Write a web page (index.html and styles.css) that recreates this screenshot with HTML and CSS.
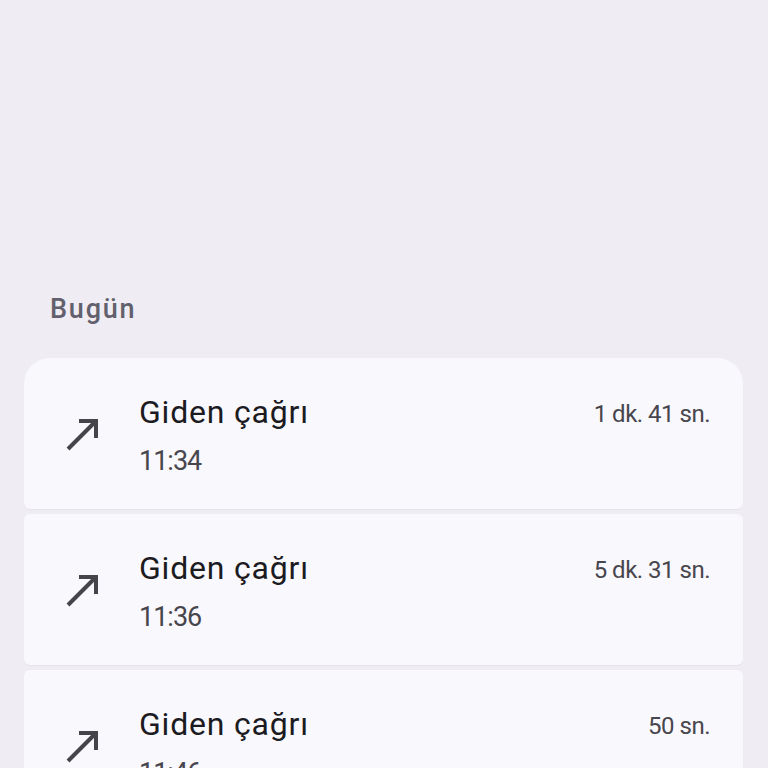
FILE: index.html
```html
<!DOCTYPE html>
<html lang="tr">
<head>
  <meta charset="UTF-8" />
  <meta name="viewport" content="width=device-width, initial-scale=1.0"/>
  <title>Arama geçmişi</title>
  <link rel="stylesheet" href="styles.css">
</head>
<body>
  <div class="history">
    <h2 class="day">Bugün</h2>
    <div class="calls">
      <div class="call first">
        <svg class="icon" viewBox="0 0 36 36"><path d="M3 33L31 5M14 5H31V22"/></svg>
        <div class="info">
          <span class="type">Giden çağrı</span>
          <span class="duration">1 dk. 41 sn.</span>
          <span class="time">11:34</span>
        </div>
      </div>
      <div class="call">
        <svg class="icon" viewBox="0 0 36 36"><path d="M3 33L31 5M14 5H31V22"/></svg>
        <div class="info">
          <span class="type">Giden çağrı</span>
          <span class="duration">5 dk. 31 sn.</span>
          <span class="time">11:36</span>
        </div>
      </div>
      <div class="call">
        <svg class="icon" viewBox="0 0 36 36"><path d="M3 33L31 5M14 5H31V22"/></svg>
        <div class="info">
          <span class="type">Giden çağrı</span>
          <span class="duration">50 sn.</span>
          <span class="time">11:46</span>
        </div>
      </div>
    </div>
  </div>
</body>
</html>
```

FILE: styles.css
```css
:root {
  --bg: #efedf3;
  --card: #f9f8fd;
  --text: #1c1b1f;
  --muted: #48464d;
  --label: #62606d;
}
* {
  box-sizing: border-box;
}
body {
  margin: 0;
  background: var(--bg);
  font-family: Roboto, "Noto Sans", sans-serif;
  color: var(--text);
  height: 768px;
  overflow: hidden;
}
.history {
  padding-top: 293px;
}
.day {
  margin: 0;
  padding-left: 50px;
  font-size: 27px;
  line-height: 32px;
  font-weight: 500;
  letter-spacing: 1.8px;
  color: var(--label);
}
.calls {
  margin: 33px 25px 0 24px;
  display: flex;
  flex-direction: column;
  gap: 5px;
}
.call {
  height: 151px;
  background: var(--card);
  border-radius: 6px;
  display: flex;
  align-items: center;
  padding: 0 33px 0 41px;
  box-shadow: 0 1px 1px rgba(0,0,0,0.04);
}
.call.first {
  border-radius: 26px 26px 6px 6px;
}
.icon {
  width: 36px;
  height: 36px;
  margin-top: 1px;
  fill: none;
  stroke: #45444a;
  stroke-width: 4;
}
.info {
  flex: 1;
  margin-left: 38px;
  display: grid;
  grid-template-columns: 1fr auto;
  align-items: center;
  margin-top: 5px;
}
.type {
  font-size: 32px;
  line-height: 46px;
  letter-spacing: 0.8px;
}
.duration {
  font-size: 24px;
  line-height: 46px;
  color: var(--muted);
  letter-spacing: -0.5px;
  padding-top: 4px;
}
.time {
  font-size: 27px;
  line-height: 48px;
  color: var(--muted);
  letter-spacing: -1px;
}
```
